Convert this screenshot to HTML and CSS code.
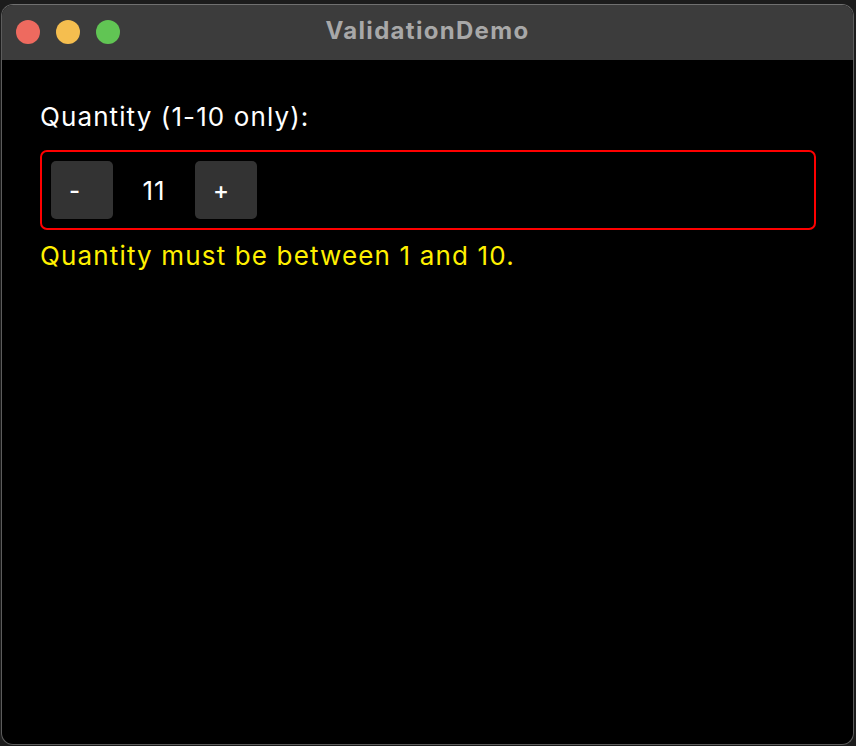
FILE: index.html
```html
<!DOCTYPE html>
<html>
<head>
<meta charset="utf-8">
<link rel="stylesheet" href="styles.css">
</head>
<body>
<div class="window">
  <div class="titlebar">
    <div class="lights">
      <span class="light red"></span>
      <span class="light yellow"></span>
      <span class="light green"></span>
    </div>
    <div class="title">ValidationDemo</div>
  </div>
  <div class="content">
    <div class="label">Quantity (1-10 only):</div>
    <div class="stepper">
      <button class="btn">-</button>
      <div class="value">11</div>
      <button class="btn">+</button>
    </div>
    <div class="error">Quantity must be between 1 and 10.</div>
  </div>
</div>
</body>
</html>
```
FILE: styles.css
```css
html, body {
  margin: 0;
  padding: 0;
  background: #1c1c1c;
  width: 856px;
  height: 746px;
  overflow: hidden;
}
body {
  padding: 4px 0 0 1px;
  box-sizing: border-box;
  font-family: Inter, "Noto Sans", sans-serif;
}
.window {
  width: 853px;
  height: 741px;
  box-sizing: border-box;
  border: 1px solid #5c5c5c;
  border-top-color: #707070;
  border-radius: 12px;
  overflow: hidden;
  background: #000;
  display: flex;
  flex-direction: column;
}
.titlebar {
  height: 55px;
  flex: none;
  background: #3c3c3c;
  position: relative;
  display: flex;
  align-items: center;
  justify-content: center;
}
.lights {
  position: absolute;
  left: 14px;
  top: 15px;
  display: flex;
  gap: 16px;
}
.light {
  width: 24px;
  height: 24px;
  border-radius: 50%;
  display: block;
}
.red { background: #ee6a5f; }
.yellow { background: #f5be4f; }
.green { background: #61c554; }
.title {
  color: #a8a8a8;
  font-weight: 700;
  font-size: 24px;
  letter-spacing: 1.3px;
  margin-top: -5px;
}
.content {
  padding: 39px 37px 0 38px;
  display: flex;
  flex-direction: column;
}
.label {
  color: #fff;
  font-size: 26px;
  letter-spacing: 1.1px;
  line-height: 36px;
}
.stepper {
  margin-top: 15px;
  border: 2px solid #ff0000;
  border-radius: 7px;
  padding: 9px;
  display: flex;
  align-items: center;
  height: 80px;
  box-sizing: border-box;
}
.btn {
  width: 62px;
  height: 58px;
  border: none;
  border-radius: 5px;
  background: #333333;
  color: #fff;
  font-family: Inter, "Noto Sans", sans-serif;
  font-size: 24px;
  font-weight: 500;
  padding: 0 0 0 18px;
  text-align: left;
}
.value {
  width: 82px;
  text-align: center;
  color: #fff;
  font-size: 26px;
  letter-spacing: 1px;
}
.error {
  color: #fff000;
  font-size: 26px;
  letter-spacing: 1.15px;
  line-height: 36px;
  margin-top: 8px;
}
```
